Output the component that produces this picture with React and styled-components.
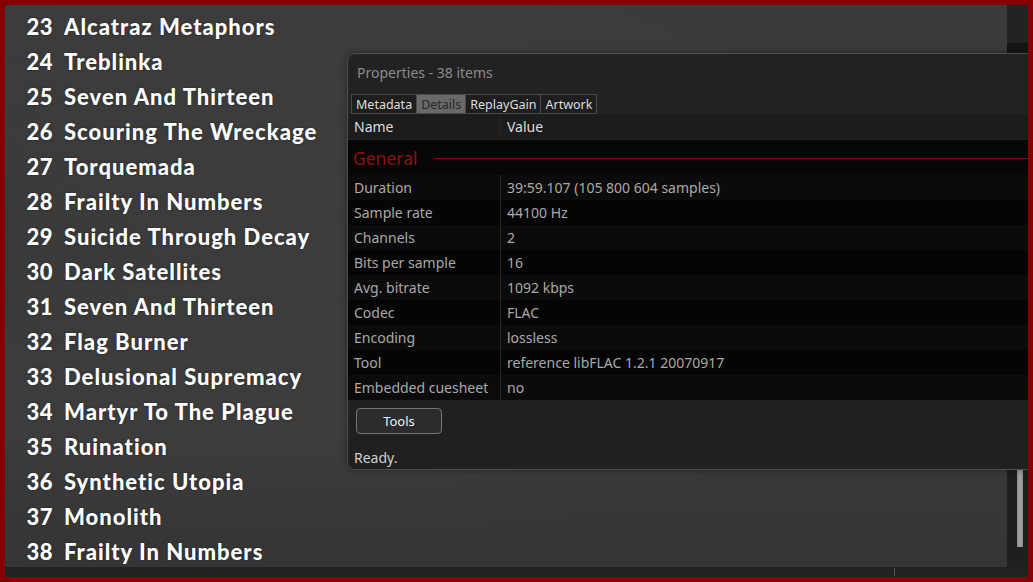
import styled, { createGlobalStyle } from "styled-components";

const GlobalStyle = createGlobalStyle`
  html, body {
    margin: 0;
    padding: 0;
    background: #850000;
    overflow: hidden;
  }
`;

const tracks = [
  [23, "Alcatraz Metaphors"],
  [24, "Treblinka"],
  [25, "Seven And Thirteen"],
  [26, "Scouring The Wreckage"],
  [27, "Torquemada"],
  [28, "Frailty In Numbers"],
  [29, "Suicide Through Decay"],
  [30, "Dark Satellites"],
  [31, "Seven And Thirteen"],
  [32, "Flag Burner"],
  [33, "Delusional Supremacy"],
  [34, "Martyr To The Plague"],
  [35, "Ruination"],
  [36, "Synthetic Utopia"],
  [37, "Monolith"],
  [38, "Frailty In Numbers"],
];

const details = [
  ["Duration", "39:59.107 (105 800 604 samples)"],
  ["Sample rate", "44100 Hz"],
  ["Channels", "2"],
  ["Bits per sample", "16"],
  ["Avg. bitrate", "1092 kbps"],
  ["Codec", "FLAC"],
  ["Encoding", "lossless"],
  ["Tool", "reference libFLAC 1.2.1 20070917"],
  ["Embedded cuesheet", "no"],
];

const tabs = ["Metadata", "Details", "ReplayGain", "Artwork"];

const App = () => {
  return (
    <>
      <GlobalStyle />
      <Frame>
        <Inner>
          <Main>
            <TrackList>
              {tracks.map(([num, title], i) => (
                <TrackRow key={i}>
                  <TrackNum>{num}</TrackNum>
                  <TrackTitle>{title}</TrackTitle>
                </TrackRow>
              ))}
            </TrackList>
            <ScrollTrack>
              <ScrollTop />
              <ScrollDither />
              <ScrollThumb />
              <ScrollEnd />
            </ScrollTrack>
          </Main>
          <StatusBar>
            <StatusTick />
          </StatusBar>

          <Window>
            <TitleBar>Properties - 38 items</TitleBar>
            <TabBar>
              {tabs.map((t) => (
                <Tab key={t} active={t === "Details"}>
                  {t}
                </Tab>
              ))}
            </TabBar>
            <HeaderRow>
              <NameCell>Name</NameCell>
              <ValueCell>Value</ValueCell>
            </HeaderRow>
            <Body>
              <GroupRow>
                <GroupLabel>General</GroupLabel>
                <GroupLine />
              </GroupRow>
              {details.map(([name, value], i) => (
                <DetailRow key={name} odd={i % 2 === 1}>
                  <NameCell>{name}</NameCell>
                  <ValueCell>{value}</ValueCell>
                </DetailRow>
              ))}
            </Body>
            <Footer>
              <ToolsButton>Tools</ToolsButton>
              <StatusText>Ready.</StatusText>
            </Footer>
          </Window>
        </Inner>
      </Frame>
    </>
  );
};

export default App;

const Frame = styled.div`
  width: 1033px;
  height: 582px;
  box-sizing: border-box;
  padding: 5px;
  background: #850000;
`;

const Inner = styled.div`
  position: relative;
  width: 1023px;
  height: 572px;
  display: flex;
  flex-direction: column;
  overflow: hidden;
`;

const Main = styled.div`
  flex: 1;
  display: flex;
  min-height: 0;
`;

const TrackList = styled.div`
  flex: 1;
  padding: 4px 0 0 17px;
  background:
    radial-gradient(ellipse at 30% 45%, rgba(255, 255, 255, 0.03), transparent 70%),
    linear-gradient(to bottom, #3b3b3b 0%, #363636 45%, #3a3a3a 75%, #353535 100%);
`;

const TrackRow = styled.div`
  display: flex;
  align-items: center;
  height: 35px;
  font-family: Lato, "Open Sans", sans-serif;
  font-weight: 900;
  font-size: 22px;
  letter-spacing: 1px;
  color: #ffffff;
  text-shadow: 0 0 2px rgba(0, 0, 0, 0.5);
`;

const TrackNum = styled.span`
  width: 31px;
  text-align: right;
  margin-right: 11px;
  letter-spacing: 0.5px;
`;

const TrackTitle = styled.span`
  white-space: nowrap;
`;

const ScrollTrack = styled.div`
  width: 21px;
  display: flex;
  flex-direction: column;
  align-items: center;
  background: #1e1e1e;
`;

const ScrollTop = styled.div`
  height: 38px;
  align-self: stretch;
  background: #232323;
`;

const ScrollDither = styled.div`
  flex: 1;
  align-self: stretch;
  background-color: #151515;
  background-image: radial-gradient(#2e2e2e 0.6px, transparent 0.7px);
  background-size: 2px 2px;
`;

const ScrollThumb = styled.div`
  width: 6px;
  height: 77px;
  margin-left: 4px;
  background: linear-gradient(to right, #8a8a8a, #a5a5a5, #8a8a8a);
`;

const ScrollEnd = styled.div`
  height: 20px;
  align-self: stretch;
  background: #1f1f1f;
`;

const StatusBar = styled.div`
  height: 10px;
  background: #222222;
  position: relative;
`;

const StatusTick = styled.div`
  position: absolute;
  left: 889px;
  top: 1px;
  width: 1px;
  height: 8px;
  background: #555;
`;

const Window = styled.div`
  position: absolute;
  left: 342px;
  top: 48px;
  width: 700px;
  height: 417px;
  box-sizing: border-box;
  border: 1px solid #4e4e4e;
  border-radius: 8px 0 0 8px;
  background: #222222;
  display: flex;
  flex-direction: column;
  overflow: hidden;
  font-family: "Noto Sans", "Open Sans", sans-serif;
  box-shadow: 0 0 6px rgba(0, 0, 0, 0.4);
`;

const TitleBar = styled.div`
  height: 40px;
  padding: 0 0 3px 9px;
  box-sizing: border-box;
  display: flex;
  align-items: center;
  font-size: 14px;
  color: #8a8a8a;
`;

const TabBar = styled.div`
  display: flex;
  padding-left: 3px;
  height: 20px;
`;

const Tab = styled.div`
  box-sizing: border-box;
  height: 20px;
  padding: 0 4px;
  display: flex;
  align-items: center;
  font-size: 12.5px;
  border: 1px solid #4a4a4a;
  border-right: none;
  &:last-child {
    border-right: 1px solid #4a4a4a;
  }
  color: ${(p) => (p.active ? "#2a2a2a" : "#dddddd")};
  background: ${(p) => (p.active ? "#686868" : "#1e1e1e")};
`;

const HeaderRow = styled.div`
  display: flex;
  height: 25px;
  align-items: center;
  background: #1c1c1c;
  font-size: 14px;
  color: #dddddd;
  border-bottom: 1px dotted #2a2a2a;
`;

const NameCell = styled.div`
  width: 153px;
  box-sizing: border-box;
  padding-left: 6px;
  height: 100%;
  display: flex;
  align-items: center;
  border-right: 1px solid #262626;
  white-space: nowrap;
`;

const ValueCell = styled.div`
  flex: 1;
  padding-left: 6px;
  white-space: nowrap;
`;

const Body = styled.div`
  background: #060606;
  display: flex;
  flex-direction: column;
`;

const GroupRow = styled.div`
  height: 35px;
  display: flex;
  align-items: center;
  padding-left: 5px;
  padding-top: 1px;
  box-sizing: border-box;
`;

const GroupLabel = styled.span`
  font-size: 17.5px;
  color: #8e1111;
  margin-right: 16px;
`;

const GroupLine = styled.div`
  flex: 1;
  height: 1px;
  background: #7a1010;
`;

const DetailRow = styled.div`
  display: flex;
  height: 25px;
  align-items: center;
  font-size: 14px;
  color: #a9a9a9;
  background: ${(p) => (p.odd ? "#050505" : "#0b0b0b")};
`;

const Footer = styled.div`
  flex: 1;
  background: #202020;
  display: flex;
  flex-direction: column;
  align-items: flex-start;
  padding: 8px 0 0 8px;
`;

const ToolsButton = styled.button`
  width: 86px;
  height: 26px;
  box-sizing: border-box;
  border: 1px solid #747474;
  border-radius: 4px;
  background: #2c2c2c;
  color: #f0f0f0;
  font-family: "Noto Sans", "Open Sans", sans-serif;
  font-size: 13px;
  padding: 0;
`;

const StatusText = styled.div`
  margin-top: 14px;
  margin-left: -2px;
  font-size: 14px;
  color: #cfcfcf;
`;
